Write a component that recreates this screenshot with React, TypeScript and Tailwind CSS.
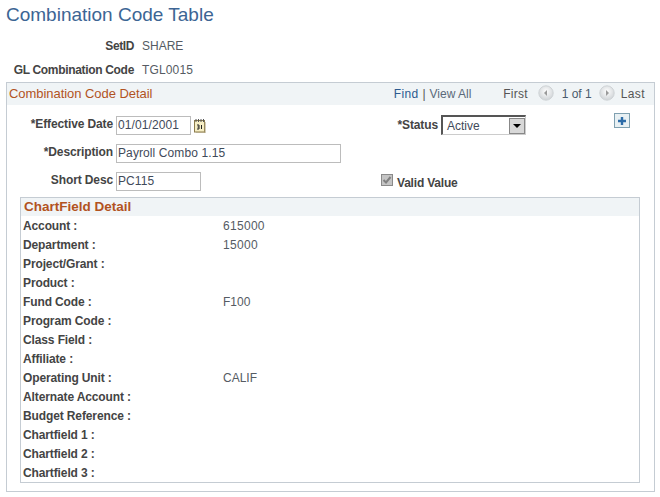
const font = "font-['Liberation_Sans',Arial,sans-serif]";

const fields: [string, string][] = [
  ["Account :", "615000"],
  ["Department :", "15000"],
  ["Project/Grant :", ""],
  ["Product :", ""],
  ["Fund Code :", "F100"],
  ["Program Code :", ""],
  ["Class Field :", ""],
  ["Affiliate :", ""],
  ["Operating Unit :", "CALIF"],
  ["Alternate Account :", ""],
  ["Budget Reference :", ""],
  ["Chartfield 1 :", ""],
  ["Chartfield 2 :", ""],
  ["Chartfield 3 :", ""],
];

function Nav({ dir }: { dir: "l" | "r" }) {
  return (
    <svg width="16" height="16" viewBox="0 0 16 16" className="shrink-0 -mt-[3px]">
      <defs>
        <radialGradient id={`g${dir}`} cx="0.5" cy="0.4" r="0.6">
          <stop offset="0" stopColor="#ffffff" />
          <stop offset="1" stopColor="#cfd3d6" />
        </radialGradient>
      </defs>
      <circle cx="8" cy="8" r="7.2" fill={`url(#g${dir})`} stroke="#cfd3d6" />
      {dir === "l" ? <path d="M9 5 L6 8 L9 11 Z" fill="#9a9a9a" /> : <path d="M7 5 L10 8 L7 11 Z" fill="#9a9a9a" />}
    </svg>
  );
}

function Label({ children, className = "" }: { children: string; className?: string }) {
  return <span className={`font-bold text-[12px] leading-[14px] text-[#444444] whitespace-nowrap tracking-[-0.12px] ${className}`}>{children}</span>;
}

function Field({ value, w }: { value: string; w: string }) {
  return (
    <div className={`${w} h-[19px] border border-[#bcbcbc] bg-white pl-[1px] text-[12px] leading-[17px] tracking-[0.1px] text-[#3f4a5a]`}>{value}</div>
  );
}

export default function App() {
  return (
    <div className={`${font} w-[660px] h-[497px] bg-white overflow-hidden text-[12px] text-[#555]`}>
      <h1 className="pl-[6px] pt-[4px] h-[36px] text-[19px] leading-[22px] font-normal text-[#3c6594]">Combination Code Table</h1>

      <div className="flex flex-col gap-[10px] pt-[3px] pl-[6px]">
        <div className="flex items-center h-[14px]">
          <Label className="w-[128px] text-right !tracking-[-0.4px]">SetID</Label>
          <span className="ml-[8px] text-[#555b63] leading-[14px]">SHARE</span>
        </div>
        <div className="flex items-center h-[14px]">
          <Label className="w-[128px] text-right !tracking-[-0.32px]">GL Combination Code</Label>
          <span className="ml-[8px] text-[#555b63] leading-[14px] tracking-[0.15px]">TGL0015</span>
        </div>
      </div>

      <div className="mt-[5px] ml-[6px] w-[649px] h-[410px] border border-[#c5ccd3]">
        <div className="h-[22px] bg-[#f0f4f6] flex items-center pl-[2px] pr-[9px]">
          <span className="text-[13px] tracking-[-0.05px] text-[#b2531f]">Combination Code Detail</span>
          <div className="ml-auto flex items-center">
            <span className="text-[#2c5a8f] tracking-[0.3px]">Find</span>
            <span className="text-[#555] mx-[4px]">|</span>
            <span className="text-[#5b6a7a]">View All</span>
            <span className="ml-[32px] text-[#555] tracking-[0.2px]">First</span>
            <span className="ml-[10px] flex"><Nav dir="l" /></span>
            <span className="ml-[8px] text-[#4a5a6c]">1 of 1</span>
            <span className="ml-[7px] flex"><Nav dir="r" /></span>
            <span className="ml-[6px] text-[#555] tracking-[0.4px]">Last</span>
          </div>
        </div>

        <div className="grid grid-cols-[106px_262px_1fr] gap-x-[3px] gap-y-[9px] pt-[11px] grid-rows-[19px_19px_19px]">
          <Label className="text-right self-start pt-[1px]">*Effective Date</Label>
          <div className="flex items-center gap-[3px]">
            <Field value="01/01/2001" w="w-[75px]" />
            <svg width="12" height="14" viewBox="0 0 12 14">
              <rect x="0.5" y="1.5" width="10" height="11.5" fill="#f6eec4" stroke="#8a7a4a" />
              <path d="M11 3v11H2" fill="none" stroke="#a89a70" />
              <path d="M2 0v3M4.5 0v3M7 0v3M9.5 0v3" stroke="#555" />
              <path d="M3 6h2v2H3.5M5 8v2H3M7.5 6v4" fill="none" stroke="#222" />
            </svg>
          </div>
          <div className="flex items-center -mt-[1px]">
            <Label className="w-[57px] text-right -mt-[1px]">*Status</Label>
            <div className="ml-[3px] w-[85px] h-[20px] border-t-2 border-l-2 border-b border-r border-t-[#555] border-l-[#555] border-b-[#ccc] border-r-[#ccc] flex items-center justify-between pl-[4px] text-[#3f4a5a] leading-[14px]">
              <span>Active</span>
              <div className="w-[16px] h-[16px] bg-[#d8d8d8] border border-[#888] flex items-center justify-center">
                <div className="w-0 h-0 border-x-[4px] border-x-transparent border-t-[4px] border-t-black" />
              </div>
            </div>
            <div className="ml-[88px] -mt-[9px] w-[16px] h-[15px] border border-[#7fa0b0] bg-[#e8f0f3] flex items-center justify-center">
              <svg width="10" height="10" viewBox="0 0 10 10"><path d="M5 1v8M1 5h8" stroke="#2d6ca8" strokeWidth="2.4" /></svg>
            </div>
          </div>

          <Label className="text-right self-start pt-[1px]">*Description</Label>
          <Field value="Payroll Combo 1.15" w="w-[225px]" />
          <div />

          <Label className="text-right self-start pt-[1px]">Short Desc</Label>
          <Field value="PC115" w="w-[85px]" />
          <div className="flex items-center gap-[4px]">
            <div className="w-[12px] h-[12px] -mt-[3px] bg-[#c4c4c4] border border-[#8a8a8a] flex items-center justify-center">
              <svg width="10" height="10" viewBox="0 0 10 10"><path d="M1.5 5l2.5 2.5L8.5 2" fill="none" stroke="#808080" strokeWidth="2" /></svg>
            </div>
            <Label className="text-[#4a5563] mt-[2px] !tracking-[-0.2px]">Valid Value</Label>
          </div>
        </div>

        <div className="mt-[6px] ml-[13px] w-[620px] h-[286px] border border-[#c5ccd3]">
          <div className="h-[18px] bg-[#f0f4f6] pl-[3px] text-[13.5px] font-bold leading-[18px] text-[#b2531f]">ChartField Detail</div>
          <div className="flex flex-col">
            {fields.map(([k, v]) => (
              <div key={k} className="flex items-center h-[19px]">
                <Label className="w-[202px] pl-[2px]">{k}</Label>
                <span className={`text-[#555b63] ${/^\d/.test(v) ? "tracking-[0.3px]" : ""}`}>{v}</span>
              </div>
            ))}
          </div>
        </div>
      </div>
    </div>
  );
}
